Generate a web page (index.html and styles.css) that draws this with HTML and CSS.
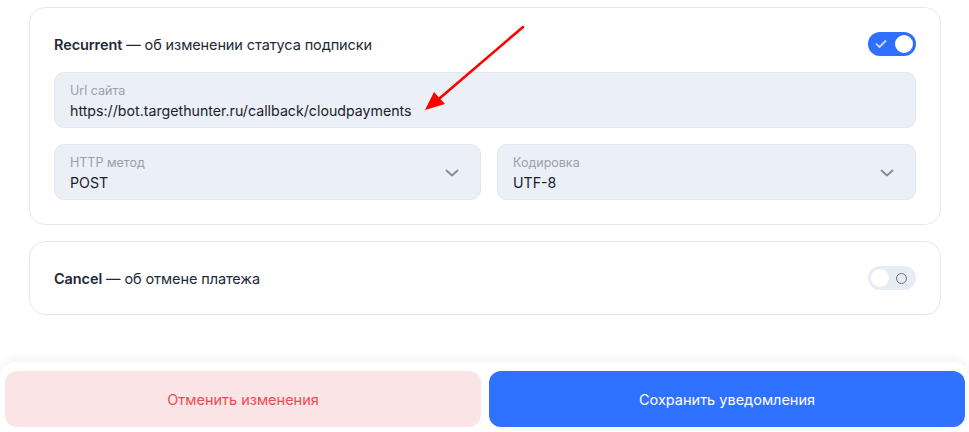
FILE: index.html
```html
<!DOCTYPE html>
<html lang="ru">
<head>
<meta charset="utf-8">
<link rel="stylesheet" href="styles.css">
</head>
<body>
<div class="page">
  <main class="content">
    <section class="card">
      <div class="card-head">
        <div class="card-title"><b>Recurrent</b> — об изменении статуса подписки</div>
        <div class="toggle on">
          <svg class="check" width="12" height="10" viewBox="0 0 12 10"><path d="M1.5 5.2 L4.5 8 L10.5 2" fill="none" stroke="#c9d8ff" stroke-width="1.8" stroke-linecap="round" stroke-linejoin="round"/></svg>
          <span class="knob"></span>
        </div>
      </div>
      <div class="field">
        <div class="field-label">Url сайта</div>
        <div class="field-value">https://bot.targethunter.ru/callback/cloudpayments</div>
      </div>
      <div class="row">
        <div class="field select">
          <div class="field-body">
            <div class="field-label">HTTP метод</div>
            <div class="field-value">POST</div>
          </div>
          <svg class="chev" width="24" height="24" viewBox="0 0 24 24"><path d="M6.5 9.5 L12 14.5 L17.5 9.5" fill="none" stroke="#858b96" stroke-width="1.8" stroke-linecap="round" stroke-linejoin="round"/></svg>
        </div>
        <div class="field select">
          <div class="field-body">
            <div class="field-label">Кодировка</div>
            <div class="field-value">UTF-8</div>
          </div>
          <svg class="chev" width="24" height="24" viewBox="0 0 24 24"><path d="M6.5 9.5 L12 14.5 L17.5 9.5" fill="none" stroke="#858b96" stroke-width="1.8" stroke-linecap="round" stroke-linejoin="round"/></svg>
        </div>
      </div>
    </section>
    <section class="card">
      <div class="card-head">
        <div class="card-title"><b>Cancel</b> — об отмене платежа</div>
        <div class="toggle off">
          <span class="knob"></span>
          <span class="ring"></span>
        </div>
      </div>
    </section>
  </main>
  <footer class="footer">
    <button class="btn btn-cancel">Отменить изменения</button>
    <button class="btn btn-save">Сохранить уведомления</button>
  </footer>
  <svg class="annot" width="969" height="432" viewBox="0 0 969 432">
    <line x1="523" y1="27" x2="440" y2="98" stroke="#f00" stroke-width="2.6" stroke-linecap="round"/>
    <polygon points="425,110 434,92 445,104" fill="#f00"/>
  </svg>
</div>
</body>
</html>
```

FILE: styles.css
```css
* { box-sizing: border-box; }
html, body { margin: 0; padding: 0; }
body {
  background: #fff;
  font-family: Inter, "Noto Sans", sans-serif;
  color: #1d2430;
  width: 969px;
  height: 432px;
  overflow: hidden;
}
.page {
  position: relative;
  height: 432px;
  display: flex;
  flex-direction: column;
}
.content {
  padding: 7px 28px 0 29px;
  display: flex;
  flex-direction: column;
  gap: 16px;
}
.card {
  border: 1px solid #e4e8ef;
  border-radius: 16px;
  padding: 24px;
  display: flex;
  flex-direction: column;
  gap: 16px;
  background: #fff;
}
.card-head {
  display: flex;
  align-items: center;
  justify-content: space-between;
  height: 24px;
}
.card-title {
  font-size: 14.5px;
  color: #222936;
  letter-spacing: -0.1px;
}
.card-title b { font-weight: 600; }
.toggle {
  width: 48px;
  height: 24px;
  border-radius: 12px;
  display: flex;
  align-items: center;
  justify-content: space-between;
  padding: 0 3px 0 7px;
}
.toggle.on { background: #2f6fff; }
.toggle.on .knob {
  width: 18px; height: 18px; border-radius: 50%; background: #fff;
}
.toggle.off {
  background: #e8ecf3;
  padding: 0 9px 0 3px;
}
.toggle.off .knob {
  width: 18px; height: 18px; border-radius: 50%; background: #fff;
}
.toggle.off .ring {
  width: 11px; height: 11px; border-radius: 50%;
  border: 1.8px solid #6a707c;
}
.field {
  background: #ebeff6;
  border: 1px solid #e2e7ef;
  border-radius: 10px;
  height: 56px;
  padding: 10px 15px 0 15px;
}
.field-label {
  font-size: 12.5px;
  color: #999fab;
  line-height: 16px;
}
.field-value {
  font-size: 14.2px;
  color: #1a2130;
  line-height: 22px;
  margin-top: 1px;
}
.row {
  display: grid;
  grid-template-columns: 427px 1fr;
  gap: 16px;
}
.select {
  display: flex;
  align-items: flex-start;
  justify-content: space-between;
}
.chev { margin-top: 6px; margin-right: 1px; }
.footer {
  margin-top: auto;
  height: 70px;
  background: #fff;
  border-radius: 16px 16px 0 0;
  box-shadow: 0 -3px 10px rgba(30, 40, 60, 0.06);
  display: grid;
  grid-template-columns: 476px 476px;
  gap: 8px;
  padding: 9px 4px 0 5px;
}
.btn {
  height: 56px;
  border: 0;
  border-radius: 12px;
  font-family: Inter, "Noto Sans", sans-serif;
  font-size: 14.5px;
  font-weight: 400;
}
.btn-cancel { background: #fae4e6; color: #ef4a52; }
.btn-save { background: #2f72ff; color: #fff; }
.annot {
  position: absolute;
  left: 0;
  top: 0;
  pointer-events: none;
}
```
